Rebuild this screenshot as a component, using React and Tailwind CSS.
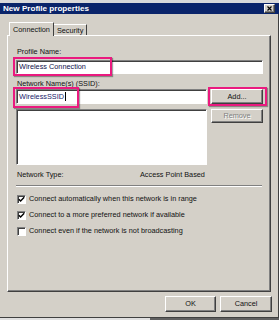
import React from "react";

const raised =
  "bg-[#d4d0c8] border border-t-white border-l-white border-b-[#404040] border-r-[#404040] shadow-[inset_-1px_-1px_0_#808080]";
const sunken =
  "bg-white border border-t-[#808080] border-l-[#808080] border-b-white border-r-white shadow-[inset_1px_1px_0_#404040]";
const pink =
  "absolute border-2 border-[#ea1a7f] shadow-[1px_1px_1px_rgba(0,0,0,0.35)] pointer-events-none";

function Check({ checked }) {
  return (
    <div className={`w-[9px] h-[9px] flex items-center justify-center ${sunken}`}>
      {checked && (
        <svg width="7" height="7" viewBox="0 0 7 7">
          <path d="M0.8 3.2 L2.6 5 L6.2 1.2" stroke="#000" strokeWidth="1.4" fill="none" />
        </svg>
      )}
    </div>
  );
}

function CheckRow({ checked, label }) {
  return (
    <div className="h-[10px] flex items-center ml-[1px]">
      <Check checked={checked} />
      <span className="ml-[3px]">{label}</span>
    </div>
  );
}

export default function App() {
  return (
    <div className="w-[279px] h-[320px] bg-[#d4d0c8] flex flex-col overflow-hidden font-['Liberation_Sans',Arial,sans-serif] text-[7.3px] leading-[10px] text-[#111]">
      <div className="h-[3px] bg-[#d9d9d9]" />
      <div className="h-[11px] bg-[#0a246a] flex items-center justify-between pl-[3px] pr-[4px]">
        <span className="text-white font-bold text-[8.1px] leading-[11px]">New Profile properties</span>
        <div className={`w-[11px] h-[9px] flex items-center justify-center ${raised}`}>
          <svg width="5" height="5" viewBox="0 0 5 5">
            <path d="M0.5 0.5 L4.5 4.5 M4.5 0.5 L0.5 4.5" stroke="#000" strokeWidth="1.2" />
          </svg>
        </div>
      </div>

      <div className="h-[303px] flex flex-col pl-[7px] pr-[7px] border-r border-r-[#404040]">
        <div className="mt-[8px] h-[14px] flex items-end pl-[2px]">
          <div className="relative z-10 h-[14px] px-[3px] pt-[2px] bg-[#d4d0c8] border-t border-l border-r border-t-white border-l-white border-r-[#404040]">
            Connection
          </div>
          <div className="h-[12px] px-[3px] pt-[1px] border-t border-r border-t-white border-r-[#404040]">
            Security
          </div>
        </div>

        <div className={`mt-[-1px] h-[257px] flex flex-col pt-[11px] pl-[8px] pr-[7px] ${raised}`}>
          <div className="ml-[1px] h-[10px]">Profile Name:</div>
          <div className="relative mt-[3px]">
            <div className={`h-[14px] flex items-center pl-[2px] text-[#10104a] ${sunken}`}>Wireless Connection</div>
            <div className={`${pink} left-[-3px] top-[-3px] w-[99px] h-[19px]`} />
          </div>

          <div className="ml-[1px] mt-[5px] h-[10px]">Network Name(s) (SSID):</div>
          <div className="flex">
            <div className="w-[191px] flex flex-col">
              <div className="relative">
                <div className={`h-[15px] flex items-center pl-[2px] text-[#1a1a6a] ${sunken}`}>
                  WirelessSSID
                  <span className="inline-block w-px h-[9px] bg-black ml-[1px]" />
                </div>
                <div className={`${pink} left-[-3px] top-[-2px] w-[66px] h-[21px]`} />
              </div>
              <div className={`mt-[5px] h-[56px] ${sunken}`} />
            </div>
            <div className="flex-1 ml-[4px] flex flex-col">
              <div className="relative">
                <div className={`h-[15px] flex items-center justify-center ${raised}`}>Add...</div>
                <div className={`${pink} left-[-3px] top-[-2px] w-[59px] h-[19px]`} />
              </div>
              <div className={`mt-[5px] h-[14px] flex items-center justify-center text-[#808080] [text-shadow:1px_1px_0_#fff] ${raised}`}>
                Remove
              </div>
            </div>
          </div>

          <div className="mt-[5px] h-[10px] flex ml-[1px]">
            <span className="w-[123px]">Network Type:</span>
            <span>Access Point Based</span>
          </div>

          <div className="mt-[5px] h-[2px] border-t border-t-[#808080] border-b border-b-white mr-[1px]" />

          <div className="mt-[7px] flex flex-col gap-[6px]">
            <CheckRow checked label="Connect automatically when this network is in range" />
            <CheckRow checked label="Connect to a more preferred network if available" />
            <CheckRow label="Connect even if the network is not broadcasting" />
          </div>
        </div>

        <div className="mt-[4px] h-[16px] flex justify-end gap-[4px] mr-[-1px]">
          <div className={`w-[51px] flex items-center justify-center ${raised}`}>OK</div>
          <div className={`w-[52px] flex items-center justify-center ${raised}`}>Cancel</div>
        </div>
      </div>

      <div className="h-px bg-[#404040]" />
      <div className="h-[2px] flex">
        <div className="w-[150px] bg-[#e0e0e0]" />
        <div className="flex-1 bg-[#606060]" />
      </div>
    </div>
  );
}
